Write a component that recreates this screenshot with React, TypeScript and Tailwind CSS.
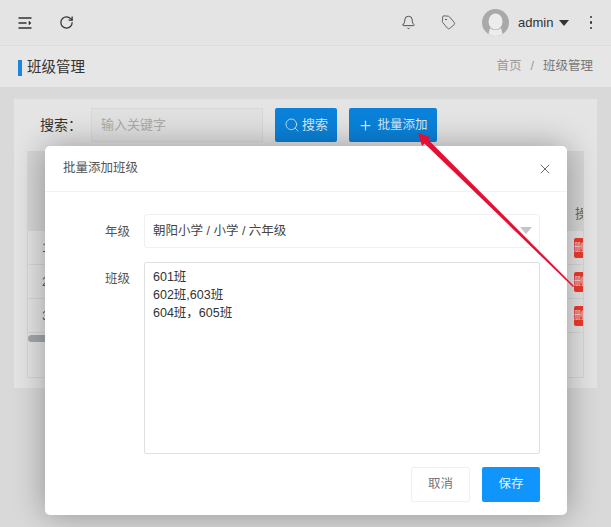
import { Bell, Tag, RotateCw, X, Plus, Search } from "lucide-react";

const FONT = "[font-family:'Liberation_Sans','Noto_Sans_CJK_SC',sans-serif]";

function Row({ n }: { n: string }) {
  return (
    <div className="flex h-[34px] items-center justify-between border-b border-[#d6d6d6] pl-[14px]">
      <span className="text-[13px] text-[#555]">{n}</span>
      <span className="-mr-[11px] flex h-[20px] w-[20px] shrink-0 items-center justify-center overflow-hidden rounded-[2px] bg-[#ee3a2c] text-[10px] text-[#f5d5d0]">删除</span>
    </div>
  );
}

export default function App() {
  return (
    <div className={`${FONT} relative h-[527px] w-[611px] overflow-hidden bg-[#d9d9d9]`}>
      <header className="flex h-[46px] items-center justify-between border-b border-[#dcdcdc] bg-[#e4e4e4] pl-[18px] pr-[19px]">
        <div className="flex items-center gap-[27px]">
          <svg width="14" height="12" viewBox="0 0 14 12" fill="none" stroke="#333" strokeWidth="1.3">
            <path d="M0.5 1h13M0.5 6h8M0.5 11h13" />
            <path d="M11 4.200l2 1.800-2 1.800z" fill="#333" strokeWidth="0.6" />
          </svg>
          <RotateCw size={15} strokeWidth={2} className="text-[#333]" />
        </div>
        <div className="flex items-center">
          <Bell size={15} strokeWidth={1.3} className="text-[#333]" />
          <Tag size={15} strokeWidth={1.2} className="ml-[25px] rotate-[5deg] text-[#444]" />
          <svg width="27" height="27" viewBox="0 0 27 27" className="ml-[26px]">
            <defs>
              <clipPath id="avatar-clip">
                <circle cx="13.5" cy="13.5" r="13.5" />
              </clipPath>
            </defs>
            <g clipPath="url(#avatar-clip)">
              <rect width="27" height="27" fill="#a9a9a9" />
              <ellipse cx="13.5" cy="12.5" rx="7" ry="8" fill="#ececec" />
              <path d="M8 19c2 2.500 9 2.500 11 0l2 8H6z" fill="#ececec" />
            </g>
          </svg>
          <span className="ml-[9px] text-[13px] leading-none text-[#333]">admin</span>
          <span className="ml-[5px] h-0 w-0 border-x-[5.500px] border-t-[6px] border-x-transparent border-t-[#333]" />
          <span className="ml-[21px] flex flex-col gap-[3px]">
            <span className="h-[2.500px] w-[2.500px] rounded-full bg-[#333]" />
            <span className="h-[2.500px] w-[2.500px] rounded-full bg-[#333]" />
            <span className="h-[2.500px] w-[2.500px] rounded-full bg-[#333]" />
          </span>
        </div>
      </header>

      <div className="flex h-[41px] items-center justify-between bg-[#e6e6e6] pl-[18px] pr-[18px]">
        <div className="flex items-center pt-[2px]">
          <span className="h-[16px] w-[4px] bg-[#1b87dc]" />
          <span className="ml-[5px] text-[14.500px] text-[#333]">班级管理</span>
        </div>
        <div className="flex items-center text-[12.500px]">
          <span className="text-[#9a9a9a]">首页</span>
          <span className="mx-[9px] text-[#9a9a9a]">/</span>
          <span className="text-[#777]">班级管理</span>
        </div>
      </div>

      <main className="ml-[14px] mt-[12px] h-[289px] w-[583px] bg-[#e4e4e4] pl-[13px] pr-[13px] pt-[9px]">
        <div className="flex items-center">
          <span className="ml-[13px] w-[51px] text-[14px] text-[#333]">搜索：</span>
          <div className="flex h-[34px] w-[172px] items-center border border-[#d8d8d8] bg-[#e0e0e0] pl-[9px] text-[13px] text-[#aaa]">
            输入关键字
          </div>
          <button className="ml-[12px] flex h-[34px] w-[62px] items-center justify-center gap-[2px] rounded-[2px] bg-[#0a82da] text-[13px] text-[#d5e8f5]">
            <Search size={16} strokeWidth={1.3} />
            搜索
          </button>
          <button className="ml-[12px] flex h-[34px] w-[88px] items-center justify-center gap-[4px] rounded-[2px] bg-[#0a82da] text-[12.500px] text-[#d5e8f5]">
            <Plus size={15} strokeWidth={2} />
            批量添加
          </button>
        </div>
        <div className="mt-[9px] h-[227px] w-[557px] overflow-hidden border border-[#d6d6d6]">
          <div className="flex h-[79px] items-end justify-end bg-[#d6d6d6] pb-[8px] text-[13px] text-[#666]">
            <span className="w-[8px] overflow-hidden whitespace-nowrap">操作</span>
          </div>
          <Row n="1" />
          <Row n="2" />
          <Row n="3" />
          <div className="flex h-[10px] items-center">
            <span className="h-[7px] w-[60px] rounded-full bg-[#a3a7ab]" />
          </div>
        </div>
      </main>

      <div className="absolute left-[45px] top-[146px] flex h-[369px] w-[522px] flex-col rounded-[5px] bg-white shadow-[0_0_32px_rgba(0,0,0,0.33)]">
        <div className="flex h-[46px] shrink-0 items-center justify-between border-b border-[#f2f2f2] pl-[18px] pr-[14px]">
          <span className="text-[12.500px] text-[#555]">批量添加班级</span>
          <X size={16} strokeWidth={1.2} className="text-[#444]" />
        </div>
        <div className="flex flex-1 flex-col pr-[27px] pt-[22px]">
          <div className="flex items-start">
            <span className="w-[99px] pr-[14px] pt-[1px] text-right text-[12.500px] leading-[34px] text-[#555]">年级</span>
            <div className="relative flex h-[34px] flex-1 items-center rounded-[3px] border border-[#f0f0f0] pl-[8px] pt-[1px] text-[12.500px] text-[#444]">
              朝阳小学 / 小学 / 六年级
              <span className="absolute right-[7px] top-[12px] h-0 w-0 border-x-[6px] border-t-[7px] border-x-transparent border-t-[#c4c4c9]" />
            </div>
          </div>
          <div className="mt-[13px] flex items-start">
            <span className="w-[99px] pr-[14px] pt-[1px] text-right text-[12.500px] leading-[32px] text-[#555]">班级</span>
            <textarea
              readOnly
              className="h-[192px] flex-1 resize-none rounded-[2px] border border-[#e0e0e0] px-[8px] py-[4.500px] text-[12.500px] leading-[18px] text-[#333] outline-none"
              defaultValue={"601班\n602班,603班\n604班，605班"}
            />
          </div>
          <div className="mt-[13px] flex justify-end gap-[12px]">
            <button className="h-[35px] w-[59px] rounded-[2px] border border-[#f0f0f0] text-[12.500px] text-[#777]">取消</button>
            <button className="h-[35px] w-[58px] rounded-[2px] bg-[#0f95fb] text-[12.500px] text-[#e6f4ff]">保存</button>
          </div>
        </div>
      </div>

      <svg className="pointer-events-none absolute left-0 top-0" width="611" height="527" viewBox="0 0 611 527">
        <polygon points="418,133 430,137 428,139.500 574,286 573,287 424.500,143.500 422,146" fill="#e40f33" />
      </svg>
    </div>
  );
}
